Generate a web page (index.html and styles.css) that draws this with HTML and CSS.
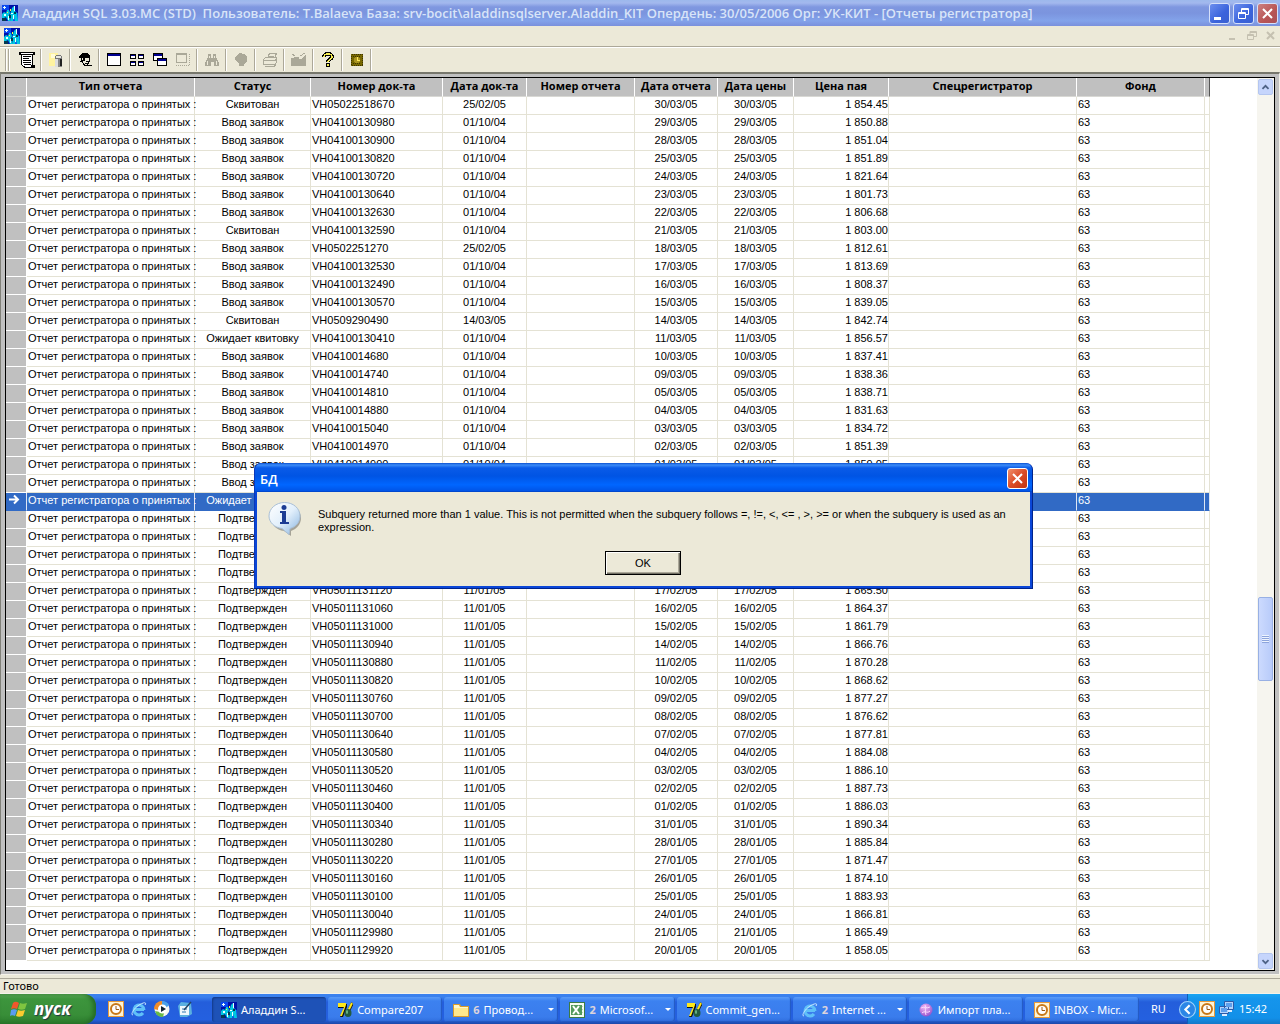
FILE: index.html
```html
<!DOCTYPE html>
<html lang="ru">
<head>
<meta charset="utf-8">
<title>Аладдин SQL - [Отчеты регистратора]</title>
<link rel="stylesheet" href="styles.css">
</head>
<body>
<svg class="defs" aria-hidden="true">
  <defs>
    <linearGradient id="bubble" x1="0" y1="0" x2="1" y2="1"><stop offset="0" stop-color="#fff"/><stop offset=".5" stop-color="#e2effb"/><stop offset="1" stop-color="#86b4e0"/></linearGradient>
    <radialGradient id="ball" cx=".4" cy=".3" r=".8"><stop offset="0" stop-color="#f4b8f4"/><stop offset="1" stop-color="#8a48c8"/></radialGradient>
  </defs>
  <symbol id="aladdin" viewBox="0 0 16 16"><path fill="#0010a8" d="M0 0h16v16H0z"/><path fill="#0a48f0" d="M0 0h7v5H0zM9 8h7v8H9z"/><path fill="#00c8e0" d="M0 9l2-2 2 1 1-3h2l1 3-1 2 2 6H6l-2-4-2 1-2 3zM10 3l2-2 1 5 2 2 1 8h-3l-1-4-1 4H9l-1-6z"/><path fill="#e8ffff" d="M2 1h1v1h1v1H3v1H2V3H1V2h1zM12 1h1v5h-1zM2 9h2v2H2zM6 11h1v4H6zM11 10h1v4h-1zM9 8h2v1H9z"/><path fill="#053a50" d="M0 13h4v3H0zM7 10h2v3H7zM12 7h2v2h-2z"/><path fill="#ff3" d="M8 4h1v2H8zM5 7h1v1H5z"/></symbol>
  <symbol id="seven" viewBox="0 0 16 16"><path fill="#111" d="M1 2h9v3L6 15H3l4-9H1z"/><path fill="#ffe818" d="M1 1h8v2L5 14H3l4-9H1z"/><path stroke="#222" stroke-width="3" d="M15.500 1l-4 8"/><path stroke="#ffe818" stroke-width="2" d="M15 1l-4 8"/><ellipse cx="11" cy="11" rx="3.500" ry="4" fill="#225b3f"/><ellipse cx="10" cy="10" rx="1" ry="2" fill="#6cb78a"/></symbol>
  <symbol id="folder" viewBox="0 0 16 16"><path fill="#d79b2c" d="M0 2h7l1 2h8v11H0z"/><path fill="#ffe88c" d="M1 6h14v8H1z"/><path fill="#fff6c8" d="M1 3h5l1 2h8v1H1z"/></symbol>
  <symbol id="excel" viewBox="0 0 16 16"><path fill="#3b7a45" d="M0 0h16v16H0z"/><path fill="#f3fbf1" d="M1 1h14v14H1z"/><path stroke="#b9d8bb" d="M9 4.500h5M9 7.500h5M9 10.500h5"/><path fill="#53995b" d="M2 3h11v10H2z"/><path stroke="#fff" stroke-width="2" d="M4 4l6 8M10 4l-6 8"/></symbol>
  <symbol id="ie" viewBox="0 0 16 16"><path fill="none" stroke="#5fc0f8" stroke-width="3" d="M13 8.500H4M13 9a5 5 0 1 0-1 3"/><path fill="none" stroke="#cbe9ff" d="M2 14c-3 0 1-7 6-10s8-3 6 0"/></symbol>
  <symbol id="inbox" viewBox="0 0 16 16"><path fill="#e59a3c" d="M0 0h16v16H0z"/><path fill="#fff4d4" d="M1 1h14v14H1z"/><circle cx="8" cy="8" r="5" fill="#fff" stroke="#c87818" stroke-width="2"/><path fill="none" stroke="#a05a10" d="M8 5v3.500h3"/></symbol>
  <symbol id="media" viewBox="0 0 16 16"><circle cx="8" cy="8" r="7.500" fill="#f5f5ee"/><path fill="#f08c28" d="M8 0a8 8 0 0 0-8 8l4 1 4-5z"/><path fill="#4aa0e8" d="M8 0a8 8 0 0 1 7 4l-3 3-4-3z"/><path fill="#67b946" d="M1 10a8 8 0 0 0 8 6l1-4-4-1z"/><circle cx="8.500" cy="8" r="4.500" fill="#fff"/><path fill="#123" d="M7 5l5 3-5 3z"/></symbol>
  <symbol id="desktop" viewBox="0 0 16 16"><path fill="#5ab0e0" d="M1 5l3-4 10 1 1 11-5 3H3z"/><path fill="#eef8fc" d="M3 5h9v9H3z"/><path fill="none" stroke="#3078b0" d="M5 8h5M5 11h4"/><path stroke="#246" stroke-width="1.500" d="M14 1L7 9"/></symbol>
  <symbol id="ball16" viewBox="0 0 16 16"><circle cx="8" cy="8" r="6.500" fill="url(#ball)"/><path fill="none" stroke="#fbd8ff" d="M3 6c3-2 6 1 9-1M4 11c3-3 5 1 8-2M7 3c2 3-1 6 1 10"/></symbol>
</svg>

<header class="titlebar">
  <svg class="i16"><use href="#aladdin"/></svg>
  <h1>Аладдин SQL 3.03.МС (STD)&nbsp; Пользователь: T.Balaeva База: srv-bocit\aladdinsqlserver.Aladdin_KIT Опердень: 30/05/2006 Орг: УК-КИТ - [Отчеты регистратора]</h1>
  <div class="winbtns">
    <button class="wb" aria-label="Свернуть"><svg viewBox="0 0 19 19"><path fill="#fff" d="M4 13h7v3H4z"/></svg></button>
    <button class="wb" aria-label="Восстановить"><svg viewBox="0 0 19 19"><path fill="none" stroke="#fff" d="M7.500 8V4.500h7v6H12M7 5.500h8M4.500 8.500h7v6h-7zM4 9.500h8"/></svg></button>
    <button class="wb close" aria-label="Закрыть"><svg viewBox="0 0 19 19"><path stroke="#fff" stroke-width="2" d="M5 5l9 9M14 5l-9 9"/></svg></button>
  </div>
</header>

<div class="menubar">
  <svg class="i16"><use href="#aladdin"/></svg>
  <div class="childbtns">
    <button aria-label="Свернуть окно"><svg viewBox="0 0 10 10"><path fill="#c5c1b1" d="M1 7h6v2H1z"/></svg></button>
    <button aria-label="Восстановить окно"><svg viewBox="0 0 10 10"><path fill="none" stroke="#c5c1b1" d="M3 3V.5h6.500v5H7M3 1.500h6M.5 3.500h6v5h-6zM1 4.500h6"/></svg></button>
    <button aria-label="Закрыть окно"><svg viewBox="0 0 10 10"><path stroke="#c5c1b1" stroke-width="2" d="M1 1l7 7M8 1L1 8"/></svg></button>
  </div>
</div>

<nav class="toolbar" aria-label="Панель инструментов">
  <span class="grip"></span>
  <button aria-label="Документ"><svg viewBox="0 0 16 16"><path d="M0 0h16v3H0zM2 3h12v10h2v3H5l-3-3z"/><path fill="#fff" d="M3 3h10v10h-1v2H6v-1H4v-1H3zM2 1h12v1H2z"/><path d="M4 4h8v1H4zM4 6h6v1H4zM4 8h8v1H4zM4 10h8v1H4zM5 12h7v1H5z"/></svg></button><i></i>
  <button aria-label="База"><svg viewBox="0 0 16 16"><path fill="#fff3a0" d="M1 1h9v13H1z"/><path fill="#fffbd8" d="M3 2h4v4H3z"/><path fill="#888" d="M7 5h7v10H7z"/><path fill="#ddd" d="M7 5h3v10H7z"/><path fill="#222" d="M12 6h2v8h-2z"/><ellipse cx="10.500" cy="5" rx="3.500" ry="1.500" fill="#e8e8e0" stroke="#777"/></svg></button><i></i>
  <button aria-label="Пользователь"><svg viewBox="0 0 16 16"><path d="M1 5l4-4h5l3 3v2H8v2H6V6H2z"/><path fill="none" stroke="#000" d="M4.500 6v3l3 4h3l2-4V6M3 9l2 1M9 9h3"/><path d="M5 8h3v1H5zM8 11h4v1H8z"/><path fill="none" stroke="#000" d="M10 13l5 1"/></svg></button><i></i>
  <button aria-label="Окно"><svg viewBox="0 0 16 16"><path d="M1 1h14v13H1z"/><path fill="#fff" d="M2 4h12v9H2z"/><path fill="#000090" d="M2 2h12v2H2z"/></svg></button>
  <button aria-label="Плитка"><svg viewBox="0 0 16 16"><path d="M1 2h6v5H1zM9 2h6v5H9zM1 9h6v5H1zM9 9h6v5H9z"/><path fill="#fff" d="M2 4h4v2H2zM10 4h4v2h-4zM2 11h4v2H2zM10 11h4v2h-4z"/><path fill="#000090" d="M2 3h4v1H2zM10 3h4v1h-4zM2 10h4v1H2zM10 10h4v1h-4z"/></svg></button>
  <button aria-label="Каскад"><svg viewBox="0 0 16 16"><path d="M1 1h10v8H1zM5 6h10v8H5z"/><path fill="#fff" d="M2 4h8v2H5v2H2zM6 9h8v4H6z"/><path fill="#000090" d="M2 2h8v2H2zM6 7h8v2H6z"/></svg></button>
  <button aria-label="Область" disabled><svg viewBox="0 0 16 16"><path fill="none" stroke="#aaa898" d="M1.500 1.500h10v9h-10zM1 2.500h10"/><path fill="none" stroke="#aaa898" stroke-dasharray="1 1" d="M14.500 2v12M1 13.500h14"/></svg></button><i></i>
  <button aria-label="Поиск" disabled><svg viewBox="0 0 16 16"><path fill="#aaa898" d="M4 2h3v4h2V2h3v3l3 6v3h-5v-4H7v4H1v-3l3-6z"/><path fill="#ece9d8" d="M3 9h1v4H3zM12 9h1v4h-1zM5 4h1v2H5zM10 4h1v2h-1z"/></svg></button><i></i>
  <button aria-label="Стоп" disabled><svg viewBox="0 0 16 16"><path fill="#aaa898" d="M4 3l3-2 4 1 3 3v4l-3 3v2H6v-3L2 8V5z"/></svg></button><i></i>
  <button aria-label="Печать" disabled><svg viewBox="0 0 16 16"><path fill="none" stroke="#aaa898" d="M5.500 6l2-4.500h7L12.500 6M7 4h5M1.500 7.500l2-2h11v5l-2 2h-11zM1 8.500h12l2-2M3 14.500h9l2-2"/></svg></button><i></i>
  <button aria-label="Экспорт" disabled><svg viewBox="0 0 16 16"><path fill="#aaa898" d="M0 6h3V5h5v2h2l5-5v12H0z"/><path fill="none" stroke="#aaa898" d="M1 2l3 2M9 4l5-3"/></svg></button><i></i>
  <button aria-label="Справка"><svg viewBox="0 0 16 16"><path fill="none" stroke="#000" stroke-width="4" d="M4 5c0-4 8-4 8 0 0 2-4 2-4 5"/><path fill="none" stroke="#f4ec50" stroke-width="1.500" d="M4 5c0-4 8-4 8 0 0 2-4 2-4 5"/><path d="M6 11h4v4H6z"/><path fill="#f4ec50" d="M7 12h2v2H7z"/></svg></button><i></i>
  <button aria-label="Время"><svg viewBox="0 0 16 16"><path fill="#776800" d="M2 2h12v12H2z"/><path fill="none" stroke="#3d3400" stroke-dasharray="1 1" d="M2.500 2.500h11v11h-11zM4 4.500h8M4 11.500h8"/><circle cx="8" cy="8" r="3" fill="#a89420"/><path fill="none" stroke="#ffe858" d="M8.500 5v3.500H11"/></svg></button><i></i>
</nav>

<main class="workspace">
  <div class="grid">
    <div class="tablebox">
      <table>
        <colgroup><col class="c-mark"><col class="c-type"><col class="c-status"><col class="c-num"><col class="c-date"><col class="c-rnum"><col class="c-rdate"><col class="c-pdate"><col class="c-price"><col class="c-spec"><col class="c-fund"><col class="c-end"></colgroup>
        <thead><tr><th></th><th>Тип отчета</th><th>Статус</th><th>Номер док-та</th><th>Дата док-та</th><th>Номер отчета</th><th>Дата отчета</th><th>Дата цены</th><th>Цена пая</th><th>Спецрегистратор</th><th>Фонд</th><th></th></tr></thead>
        <tbody id="rows"></tbody>
      </table>
    </div>
    <div class="scroll">
      <button aria-label="Вверх"><svg viewBox="0 0 15 15"><path fill="none" stroke="#4d6185" stroke-width="2" d="M4 9l3.500-3.500L11 9"/></svg></button>
      <div class="track"><div class="thumb"></div></div>
      <button aria-label="Вниз"><svg viewBox="0 0 15 15"><path fill="none" stroke="#4d6185" stroke-width="2" d="M4 6l3.500 3.500L11 6"/></svg></button>
    </div>
  </div>
</main>

<div class="status">Готово</div>

<footer class="taskbar">
  <button class="start"><svg viewBox="0 0 18 18"><path fill="#f0572c" d="M3 3c2-2 4-1 6 0L7 9C5 8 3 8 1 9z"/><path fill="#7fc540" d="M10 3c2 1 4 1 7 0l-2 6c-2 1-5 1-7 0z"/><path fill="#5b9cf2" d="M1 10c2-1 4-1 6 0l-2 6c-2-1-4-1-5 0z"/><path fill="#fbcb30" d="M8 10c2 1 4 1 7 0l-2 6c-3 1-5 1-7 0z"/></svg>пуск</button>
  <div class="quick">
    <svg class="i16"><use href="#inbox"/></svg><svg class="i16"><use href="#ie"/></svg><svg class="i16"><use href="#media"/></svg><svg class="i16"><use href="#desktop"/></svg>
  </div>
  <div class="tasks">
    <button class="task active"><svg class="i16"><use href="#aladdin"/></svg><span>Аладдин S...</span></button>
    <button class="task"><svg class="i16"><use href="#seven"/></svg><span>Compare207</span></button>
    <button class="task group"><svg class="i16"><use href="#folder"/></svg><b>6</b><span>Провод...</span></button>
    <button class="task group"><svg class="i16"><use href="#excel"/></svg><b>2</b><span>Microsof...</span></button>
    <button class="task"><svg class="i16"><use href="#seven"/></svg><span>Commit_gen...</span></button>
    <button class="task group"><svg class="i16"><use href="#ie"/></svg><b>2</b><span>Internet ...</span></button>
    <button class="task"><svg class="i16"><use href="#ball16"/></svg><span>Импорт пла...</span></button>
    <button class="task"><svg class="i16"><use href="#inbox"/></svg><span>INBOX - Micr...</span></button>
  </div>
  <div class="lang">RU</div>
  <div class="tray">
    <button class="chev" aria-label="Скрытые значки"><svg viewBox="0 0 16 16"><circle cx="8" cy="8" r="7.500" fill="#2b86e6" stroke="#9fd2fb"/><path fill="none" stroke="#fff" stroke-width="2" d="M10 4L6 8l4 4"/></svg></button>
    <svg class="i16"><use href="#inbox"/></svg>
    <svg class="i16" viewBox="0 0 16 16"><path fill="#b4d4fb" stroke="#2c5aa8" d="M6.500.5h9v8h-9zM1.500 5.500h9v7h-9z"/><path fill="#5d9fec" d="M8 2h6v4H8zM3 7h6v4H3z"/><path fill="#dcecff" d="M10 9h4v2h-4zM4 13h5v2H4z"/></svg>
    <time>15:42</time>
  </div>
</footer>

<div class="dialog" role="alertdialog" aria-labelledby="dlg-title" aria-describedby="dlg-text">
  <div class="dlg-head"><h2 id="dlg-title">БД</h2><button class="wb close" aria-label="Закрыть сообщение"><svg viewBox="0 0 19 19"><path stroke="#fff" stroke-width="2" d="M5 5l9 9M14 5l-9 9"/></svg></button></div>
  <div class="dlg-body">
    <div class="dlg-msg">
      <svg class="info" viewBox="0 0 34 34"><path fill="#76756c" opacity=".6" d="M18 3c9 0 15 6 15 13 0 6-4 11-10 13v5l-7-5C8 28 4 23 4 17 4 9 10 3 18 3z"/><path fill="url(#bubble)" stroke="#a9bfd6" d="M16.500.5c9 0 15.500 6 15.500 13.500 0 6-4 11-10 12.500l-1 6-7-6C6 25.500 1 20 1 14 1 6.500 8 .5 16.500.5z"/><circle cx="16" cy="5.500" r="2.500" fill="#1c3c94"/><path fill="#1c3c94" d="M12 9h6v11h3v2h-9v-2h2v-9h-2z"/></svg>
      <p id="dlg-text">Subquery returned more than 1 value. This is not permitted when the subquery follows =, !=, &lt;, &lt;= , &gt;, &gt;= or when the subquery is used as an expression.</p>
    </div>
    <button class="ok">OK</button>
  </div>
</div>
<script src="rows.js"></script>
</body>
</html>
```
FILE: styles.css
```css
* { box-sizing: border-box; }
body {
  margin: 0;
  min-height: 100vh;
  display: flex;
  flex-direction: column;
  background: #ece9d8;
  font: 11px/14px "Liberation Sans", Arial, sans-serif;
  color: #000;
}
button { margin: 0; padding: 0; border: 0; background: none; font: inherit; color: inherit; }
h1, h2, p { margin: 0; }
svg { display: block; flex: none; }
.defs { position: absolute; width: 0; height: 0; }
.i16 { width: 16px; height: 16px; }

.titlebar {
  display: flex;
  align-items: center;
  height: 26px;
  padding: 0 2px;
  gap: 4px;
  background: linear-gradient(#9db9ec 0, #a3b8ee 3px, #7f97e0 7px, #7b94de 50%, #83a3ea 80%, #7a90dc);
  color: #d8e4f8;
}
.titlebar h1 { flex: 1; font: 600 13px/18px "Open Sans", sans-serif; white-space: nowrap; overflow: hidden; }
.winbtns { display: flex; gap: 3px; }
.wb {
  width: 21px;
  height: 21px;
  border: 1px solid #d5e0fa;
  border-radius: 3px;
  background: linear-gradient(135deg, #6c8eee, #3a63dc 60%, #3a60d0);
}
.wb.close { background: linear-gradient(135deg, #cc8080, #b85454 60%, #a85058); }

.menubar {
  display: flex;
  align-items: center;
  justify-content: space-between;
  height: 21px;
  padding: 0 4px;
  border-bottom: 1px solid #aca899;
}
.childbtns { display: flex; gap: 9px; }
.childbtns svg { width: 10px; height: 10px; }

.toolbar {
  display: flex;
  align-items: center;
  height: 25px;
  border-top: 1px solid #fff;
  padding-left: 5px;
}
.toolbar button { width: 23px; height: 22px; display: grid; place-items: center; }
.toolbar svg { width: 16px; height: 16px; shape-rendering: crispEdges; }
.toolbar i { width: 2px; height: 22px; margin: 0 2px; background: linear-gradient(90deg, #aca899 50%, #fff 50%); }
.grip { width: 4px; height: 22px; margin-right: 6px; border: solid #aca899; border-width: 0 1px; box-shadow: inset 1px 0 #fff, 1px 0 #fff; }

.workspace {
  flex: 1;
  display: flex;
  padding: 3px 4px;
  background: #c0c0c0;
  border: 1px solid #808078;
  border-top: 2px solid #77776c;
  border-right-color: #f4f2ea;
  border-bottom-color: #f4f2ea;
}
.grid { flex: 1; display: flex; min-width: 0; background: #fff; border: 1px solid #000; }
.tablebox { flex: 1; min-width: 0; overflow: hidden; }
table { width: 1204px; table-layout: fixed; border-collapse: separate; border-spacing: 0; }
.c-mark { width: 21px; }
.c-type { width: 168px; }
.c-status { width: 116px; }
.c-num { width: 132px; }
.c-date { width: 84px; }
.c-rnum { width: 108px; }
.c-rdate { width: 83px; }
.c-pdate { width: 76px; }
.c-price { width: 95px; }
.c-spec { width: 188px; }
.c-fund { width: 128px; }
.c-end { width: 5px; }
th, td { height: 18px; padding: 0; vertical-align: top; white-space: nowrap; }
th { height: 19px; padding-top: 1px; background: #c0c0c0; border-right: 1px solid #fff; border-bottom: 1px solid #d8d8d4; font: bold 11px/14px "Open Sans", sans-serif; text-align: center; }
th:last-child { border-right-color: #555; }
td { padding: 0 1px; border-right: 1px solid #e4e2d4; border-bottom: 1px solid #e4e2d4; text-align: left; }
td:first-child { background: #c0c0c0; border-color: #fff; }
td:nth-child(3), td:nth-child(5), td:nth-child(7), td:nth-child(8) { text-align: center; }
td:nth-child(9) { padding: 0; text-align: right; }
tr.selected td { background: #316ac5; color: #fff; border-bottom-color: #316ac5; border-right-color: #dde6f4; }
tr.selected svg { width: 13px; height: 13px; }

.scroll { width: 17px; display: flex; flex-direction: column; background: #f6f5ef; padding: 1px; }
.scroll button { height: 16px; border: 1px solid #b4c6f0; border-radius: 2px; background: #c6d5fc; }
.track { flex: 1; display: flex; flex-direction: column; }
.track::before { content: ""; flex: 504; }
.track::after { content: ""; flex: 273; }
.thumb { height: 84px; border: 1px solid #98b0e4; border-radius: 2px; background: linear-gradient(90deg, #ccdafe, #b8cbfa); display: grid; place-items: center; }
.thumb::before { content: ""; width: 7px; height: 8px; background: repeating-linear-gradient(#eef4fe 0 1px, #8ca4dc 1px 2px); }

.status { height: 15px; margin-top: 3px; padding: 0 3px; border-top: 1px solid #aca899; font: 11px/14px "Noto Sans", sans-serif; }

.taskbar {
  display: flex;
  height: 31px;
  border-top: 1px solid #f4f2ea;
  background: linear-gradient(#3a82ee 0, #3b80ee 3px, #245edb 8px, #2460e0 85%, #1c48a8);
  color: #fff;
  font: 11px/14px "Noto Sans", sans-serif;
}
.start {
  display: flex;
  align-items: center;
  gap: 6px;
  width: 96px;
  padding-left: 10px;
  border-radius: 0 12px 12px 0;
  background: linear-gradient(#5fae5c 0, #3d953d 5px, #388e38 70%, #2a7a2c);
  box-shadow: inset -3px 0 4px #256b25;
  font: italic bold 17px/24px "Open Sans", sans-serif;
  text-shadow: 1px 1px 1px #234;
}
.start svg { width: 18px; height: 18px; }
.quick { display: flex; align-items: center; gap: 7px; width: 116px; padding-left: 12px; }
.tasks { flex: 1; min-width: 0; display: grid; grid-template-columns: repeat(8, 1fr); padding: 3px 0 2px; }
.task {
  display: flex;
  align-items: center;
  gap: 4px;
  min-width: 0;
  margin-right: 2px;
  padding: 0 4px 0 9px;
  border-radius: 3px;
  background: linear-gradient(#5a9bf8, #3c81f0 4px, #3a7cec 80%, #2f6ddc);
  box-shadow: inset -1px -1px 1px #2358c0;
  white-space: nowrap;
}
.task.active { background: #1e52b7; box-shadow: inset 1px 1px 2px #133a88; }
.task b { color: #dcd4dc; }
.group::after { content: ""; margin-left: auto; border: 3px solid transparent; border-top-color: #fff; border-bottom: 0; }
.lang { width: 46px; padding: 8px 0 0 10px; }
.tray {
  display: flex;
  align-items: center;
  gap: 3px;
  width: 93px;
  background: linear-gradient(#19a5f2 0, #1595ec 5px, #1290e8 80%, #1478c8);
  border-left: 1px solid #0d60b8;
}
.chev { margin-left: -9px; }
.chev svg { width: 17px; height: 17px; }
.tray time { margin-left: 2px; }

.dialog {
  position: absolute;
  left: 254px;
  top: 463px;
  width: 779px;
  padding: 0 3px 3px;
  border-radius: 7px 7px 0 0;
  background: #0a46d8;
  box-shadow: inset -1px -1px #00248c, inset 1px 0 #0a38b8;
  font: 11px/13px "Liberation Sans", Arial, sans-serif;
}
.dlg-head {
  display: flex;
  align-items: center;
  justify-content: space-between;
  height: 29px;
  margin: 0 -2px;
  padding: 2px 4px 0 5px;
  border-radius: 7px 7px 0 0;
  background: linear-gradient(#0a50d0 0, #3c8cf8 2px, #0a5be8 5px, #0054e4 45%, #0066ff 75%, #0055e8 95%, #0040c0);
  color: #fff;
}
.dlg-head h2 { font: 600 13px/18px "Open Sans", sans-serif; }
.dlg-head .wb.close { border-color: #fff; background: linear-gradient(135deg, #f0906c, #dc4c28 50%, #c03410); }
.dlg-body { display: flex; flex-direction: column; align-items: center; padding: 10px 12px 11px 11px; background: #ece9d8; }
.dlg-msg { display: flex; align-self: stretch; gap: 16px; }
.info { width: 34px; height: 34px; }
.dlg-msg p { padding-top: 6px; }
.ok {
  width: 76px;
  height: 24px;
  margin-top: 15px;
  border: 1px solid #000;
  background: #ece9d8;
  box-shadow: inset 1px 1px #fff, inset -1px -1px #716f64, inset -2px -2px #aca899;
}
```
FILE: rows.js
```js
// status | document no. | document date | report date | price
const STATUS = { v: "Ввод заявок", s: "Сквитован", o: "Ожидает квитовку", p: "Подтвержден" };
const rows = `s VH05022518670 25/02/05 30/03/05 1854.45
v VH04100130980 01/10/04 29/03/05 1850.88
v VH04100130900 01/10/04 28/03/05 1851.04
v VH04100130820 01/10/04 25/03/05 1851.89
v VH04100130720 01/10/04 24/03/05 1821.64
v VH04100130640 01/10/04 23/03/05 1801.73
v VH04100132630 01/10/04 22/03/05 1806.68
s VH04100132590 01/10/04 21/03/05 1803.00
v VH0502251270 25/02/05 18/03/05 1812.61
v VH04100132530 01/10/04 17/03/05 1813.69
v VH04100132490 01/10/04 16/03/05 1808.37
v VH04100130570 01/10/04 15/03/05 1839.05
s VH0509290490 14/03/05 14/03/05 1842.74
o VH04100130410 01/10/04 11/03/05 1856.57
v VH0410014680 01/10/04 10/03/05 1837.41
v VH0410014740 01/10/04 09/03/05 1838.36
v VH0410014810 01/10/04 05/03/05 1838.71
v VH0410014880 01/10/04 04/03/05 1831.63
v VH0410015040 01/10/04 03/03/05 1834.72
v VH0410014970 01/10/04 02/03/05 1851.39
v VH0410014990 01/10/04 01/03/05 1859.05
v - - - -
o - - - -
p - - - -
p - - - -
p - - - -
p - - - -
p VH05011131120 11/01/05 17/02/05 1865.50
p VH05011131060 11/01/05 16/02/05 1864.37
p VH05011131000 11/01/05 15/02/05 1861.79
p VH05011130940 11/01/05 14/02/05 1866.76
p VH05011130880 11/01/05 11/02/05 1870.28
p VH05011130820 11/01/05 10/02/05 1868.62
p VH05011130760 11/01/05 09/02/05 1877.27
p VH05011130700 11/01/05 08/02/05 1876.62
p VH05011130640 11/01/05 07/02/05 1877.81
p VH05011130580 11/01/05 04/02/05 1884.08
p VH05011130520 11/01/05 03/02/05 1886.10
p VH05011130460 11/01/05 02/02/05 1887.73
p VH05011130400 11/01/05 01/02/05 1886.03
p VH05011130340 11/01/05 31/01/05 1890.34
p VH05011130280 11/01/05 28/01/05 1885.84
p VH05011130220 11/01/05 27/01/05 1871.47
p VH05011130160 11/01/05 26/01/05 1874.10
p VH05011130100 11/01/05 25/01/05 1883.93
p VH05011130040 11/01/05 24/01/05 1866.81
p VH05011129980 11/01/05 21/01/05 1865.49
p VH05011129920 11/01/05 20/01/05 1858.05`.split("\n");

const SELECTED = 22;
const ARROW = '<svg viewBox="0 0 13 13"><path fill="none" stroke="#fff" stroke-width="2" d="M2 6.500h9M7 2.500l4 4-4 4"/></svg>';

document.getElementById("rows").innerHTML = rows.map((line, n) => {
  const [status, ...rest] = line.split(" ");
  const [num, date, report, price] = rest.map(v => v === "-" ? "" : v);
  const cells = [n === SELECTED ? ARROW : "", "Отчет регистратора о принятых :", STATUS[status], num, date, "",
    report, report, price.replace(/^1/, "1 "), "", "63", ""];
  return `<tr${n === SELECTED ? ' class="selected"' : ""}>${cells.map(c => `<td>${c}</td>`).join("")}</tr>`;
}).join("");
```
